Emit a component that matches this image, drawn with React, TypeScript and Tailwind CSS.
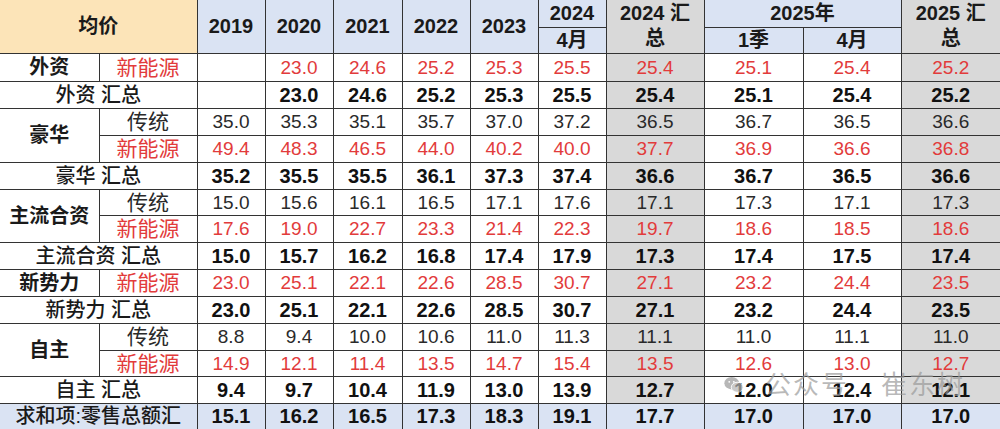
import React from "react";

type Row =
  | { kind: "sub"; group?: string; span?: number; label: string; red?: boolean; h: number; values: string[] }
  | { kind: "total"; label: string; h: number; values: string[]; foot?: boolean };

const rows: Row[] = [
  { kind: "sub", group: "外资", span: 1, label: "新能源", red: true, h: 28, values: ["", "23.0", "24.6", "25.2", "25.3", "25.5", "25.4", "25.1", "25.4", "25.2"] },
  { kind: "total", label: "外资 汇总", h: 27, values: ["", "23.0", "24.6", "25.2", "25.3", "25.5", "25.4", "25.1", "25.4", "25.2"] },
  { kind: "sub", group: "豪华", span: 2, label: "传统", h: 27, values: ["35.0", "35.3", "35.1", "35.7", "37.0", "37.2", "36.5", "36.7", "36.5", "36.6"] },
  { kind: "sub", label: "新能源", red: true, h: 27, values: ["49.4", "48.3", "46.5", "44.0", "40.2", "40.0", "37.7", "36.9", "36.6", "36.8"] },
  { kind: "total", label: "豪华 汇总", h: 27, values: ["35.2", "35.5", "35.5", "36.1", "37.3", "37.4", "36.6", "36.7", "36.5", "36.6"] },
  { kind: "sub", group: "主流合资", span: 2, label: "传统", h: 26, values: ["15.0", "15.6", "16.1", "16.5", "17.1", "17.6", "17.1", "17.3", "17.1", "17.3"] },
  { kind: "sub", label: "新能源", red: true, h: 27, values: ["17.6", "19.0", "22.7", "23.3", "21.4", "22.3", "19.7", "18.6", "18.5", "18.6"] },
  { kind: "total", label: "主流合资 汇总", h: 27, values: ["15.0", "15.7", "16.2", "16.8", "17.4", "17.9", "17.3", "17.4", "17.5", "17.4"] },
  { kind: "sub", group: "新势力", span: 1, label: "新能源", red: true, h: 27, values: ["23.0", "25.1", "22.1", "22.6", "28.5", "30.7", "27.1", "23.2", "24.4", "23.5"] },
  { kind: "total", label: "新势力 汇总", h: 27, values: ["23.0", "25.1", "22.1", "22.6", "28.5", "30.7", "27.1", "23.2", "24.4", "23.5"] },
  { kind: "sub", group: "自主", span: 2, label: "传统", h: 27, values: ["8.8", "9.4", "10.0", "10.6", "11.0", "11.3", "11.1", "11.0", "11.1", "11.0"] },
  { kind: "sub", label: "新能源", red: true, h: 26, values: ["14.9", "12.1", "11.4", "13.5", "14.7", "15.4", "13.5", "12.6", "13.0", "12.7"] },
  { kind: "total", label: "自主 汇总", h: 27, values: ["9.4", "9.7", "10.4", "11.9", "13.0", "13.9", "12.7", "12.0", "12.4", "12.1"] },
  { kind: "total", label: "求和项:零售总额汇", h: 26, foot: true, values: ["15.1", "16.2", "16.5", "17.3", "18.3", "19.1", "17.7", "17.0", "17.0", "17.0"] },
];

const widths = [99, 98, 68, 68, 69, 68, 68, 68, 98, 99, 98, 99];
// value columns 6 and 9 are the gray 汇总 columns
const grayCols = [6, 9];

const base = "border border-[#333] text-center align-middle p-0 whitespace-nowrap";
const cell = `${base} leading-none`;

const App = () => {
  return (
    <div
      className="relative w-[1000px] h-[429px] overflow-hidden bg-white"
      style={{ fontFamily: '"Liberation Sans", "Noto Sans CJK SC", sans-serif' }}
    >
      <table className="w-[1000px] table-fixed border-collapse border-hidden text-[#1a1a1a]">
        <colgroup>
          {widths.map((w, i) => (
            <col key={i} style={{ width: w }} />
          ))}
        </colgroup>
        <thead>
          <tr className="h-[27px]">
            <th rowSpan={2} colSpan={2} className={`${cell} bg-[#fce4b8] text-[20px] font-bold`}>均价</th>
            {["2019", "2020", "2021", "2022", "2023"].map((y) => (
              <th key={y} rowSpan={2} className={`${cell} bg-[#dae3f3] text-[20px] font-bold`}>{y}</th>
            ))}
            <th className={`${cell} bg-[#dae3f3] text-[20px] font-bold`}>2024</th>
            <th rowSpan={2} className={`${base} bg-[#d9d9d9] text-[20px] font-bold leading-[25px]`}>
              2024 汇<br />总
            </th>
            <th colSpan={2} className={`${cell} bg-[#dae3f3] text-[20px] font-bold`}>2025年</th>
            <th rowSpan={2} className={`${base} bg-[#d9d9d9] text-[20px] font-bold leading-[25px]`}>
              2025 汇<br />总
            </th>
          </tr>
          <tr className="h-[26px]">
            <th className={`${cell} bg-[#dae3f3] text-[20px] font-bold`}>4月</th>
            <th className={`${cell} bg-[#dae3f3] text-[20px] font-bold`}>1季</th>
            <th className={`${cell} bg-[#dae3f3] text-[20px] font-bold`}>4月</th>
          </tr>
        </thead>
        <tbody>
          {rows.map((r, ri) => (
            <tr key={ri} style={{ height: r.h }}>
              {r.kind === "sub" ? (
                <>
                  {r.group && (
                    <td rowSpan={r.span} className={`${cell} text-[20px] font-semibold`}>{r.group}</td>
                  )}
                  <td className={`${cell} text-[21px] ${r.red ? "text-[#e23b3b]" : "text-[#2a2a2a]"}`}>{r.label}</td>
                </>
              ) : (
                <td colSpan={2} className={`${cell} text-[20px] font-medium ${r.foot ? "bg-[#dae3f3]" : ""}`}>{r.label}</td>
              )}
              {r.values.map((v, vi) => {
                const gray = grayCols.includes(vi);
                const bg = r.kind === "total" && r.foot ? "bg-[#dae3f3]" : gray ? "bg-[#d9d9d9]" : "";
                const txt =
                  r.kind === "total"
                    ? "text-[20px] font-bold text-[#111]"
                    : r.red
                    ? "text-[19px] text-[#e23b3b]"
                    : "text-[19px] text-[#2a2a2a]";
                return (
                  <td key={vi} className={`${cell} ${bg} ${txt}`}>{v}</td>
                );
              })}
            </tr>
          ))}
        </tbody>
      </table>

      {/* watermark */}
      <div className="absolute left-[723px] top-[372px] flex items-center text-[#9a9a9a]/70 pointer-events-none">
        <svg width="22" height="22" viewBox="0 0 24 24" className="opacity-70">
          <ellipse cx="9.5" cy="10" rx="8" ry="6.8" fill="#9a9a9a" />
          <ellipse cx="15.5" cy="14.5" rx="6.5" ry="5.5" fill="#b5b5b5" stroke="#fff" strokeWidth="1" />
          <circle cx="6.8" cy="8.5" r="1" fill="#fff" />
          <circle cx="11.8" cy="8.5" r="1" fill="#fff" />
        </svg>
        <span className="ml-[20px] text-[26px] leading-none tracking-[2px]">公众号</span>
        <span className="ml-[32px] text-[26px] leading-none tracking-[2px]">崔东树</span>
      </div>
    </div>
  );
};

export default App;
